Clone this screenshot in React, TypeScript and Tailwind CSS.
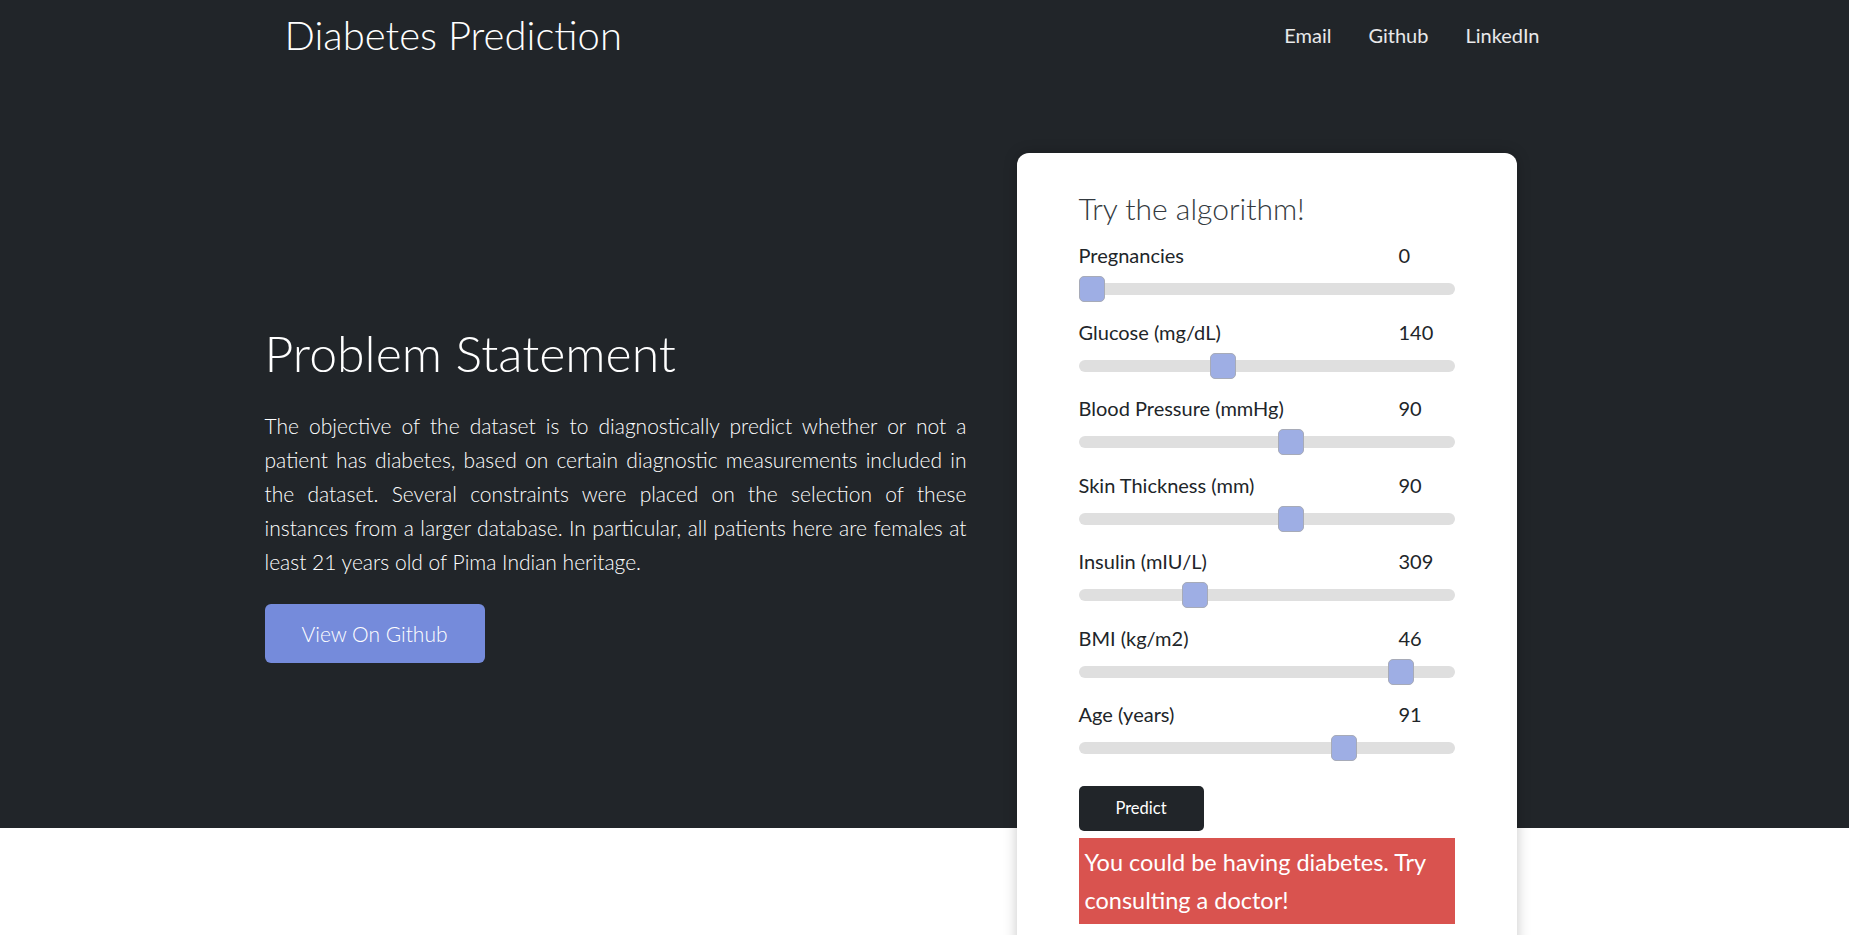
import React from "react";

type Field = {
	label: string;
	value: number;
	min: number;
	max: number;
};

const fields: Field[] = [
	{ label: "Pregnancies", value: 0, min: 0, max: 17 },
	{ label: "Glucose (mg/dL)", value: 140, min: 0, max: 374 },
	{ label: "Blood Pressure (mmHg)", value: 90, min: 0, max: 158 },
	{ label: "Skin Thickness (mm)", value: 90, min: 0, max: 158 },
	{ label: "Insulin (mIU/L)", value: 309, min: 0, max: 1047 },
	{ label: "BMI (kg/m2)", value: 46, min: 0, max: 52 },
	{ label: "Age (years)", value: 91, min: 21, max: 118 },
];

function Slider({ field }: { field: Field }) {
	const frac = (field.value - field.min) / (field.max - field.min);
	return (
		<div className="flex flex-col">
			<div className="flex text-[20px] leading-[28px] text-[#212529]">
				<span className="w-[320px]">{field.label}</span>
				<span>{field.value}</span>
			</div>
			<div className="relative mt-[7px] flex h-[26px] items-center">
				<div className="h-[12px] w-full rounded-full bg-[#dfdfdf]" />
				<div
					className="absolute top-0 h-[26px] w-[26px] rounded-[5px] border border-[#a7abb8] bg-[#9eaee4]"
					style={{ left: `calc((100% - 26px) * ${frac})` }}
				/>
			</div>
		</div>
	);
}

export default function App() {
	return (
		<div className="h-screen overflow-hidden bg-white font-['Lato','Open_Sans',sans-serif]">
			<div className="h-[828px] bg-[#212529]">
				<header className="mx-auto flex h-[70px] w-[1320px] items-center justify-between">
					<h1 className="pl-[20px] text-[40px] font-light leading-[48px] text-white">
						Diabetes Prediction
					</h1>
					<nav className="flex gap-[37px] pr-[45px] text-[20px] text-white/90">
						<a href="#">Email</a>
						<a href="#">Github</a>
						<a href="#">LinkedIn</a>
					</nav>
				</header>

				<main className="mx-auto flex w-[1320px] items-start">
					<section className="mt-[253px] w-[702px]">
						<h2 className="text-[50px] font-light leading-[60px] text-white">
							Problem Statement
						</h2>
						<p className="mt-[26px] text-justify text-[21px] font-light leading-[34px] text-white">
							The objective of the dataset is to diagnostically predict whether
							or not a patient has diabetes, based on certain diagnostic
							measurements included in the dataset. Several constraints were
							placed on the selection of these instances from a larger database.
							In particular, all patients here are females at least 21 years old
							of Pima Indian heritage.
						</p>
						<button
							type="button"
							className="mt-[25px] flex h-[59px] w-[220px] items-center justify-center rounded-[6px] bg-[#758bdb] text-[21px] font-light text-white"
						>
							View On Github
						</button>
					</section>

					<section className="ml-[50px] mt-[83px] w-[500px] rounded-[12px] bg-white px-[62px] pb-[48px] pt-[37px] shadow-[0_0_14px_rgba(0,0,0,0.22)]">
						<h3 className="text-[30px] font-light leading-[36px] text-[#343a40]">
							Try the algorithm!
						</h3>
						<div className="mt-[15px] flex flex-col gap-[15.5px]">
							{fields.map((f) => (
								<Slider key={f.label} field={f} />
							))}
						</div>
						<button
							type="button"
							className="mt-[25px] h-[45px] w-[125px] rounded-[5px] bg-[#212529] text-[16.5px] text-white"
						>
							Predict
						</button>
						<div className="mt-[7px] bg-[#d9534f] px-[6px] py-[5px] text-[23.5px] leading-[38px] text-white">
							You could be having diabetes. Try consulting a doctor!
						</div>
					</section>
				</main>
			</div>
		</div>
	);
}
